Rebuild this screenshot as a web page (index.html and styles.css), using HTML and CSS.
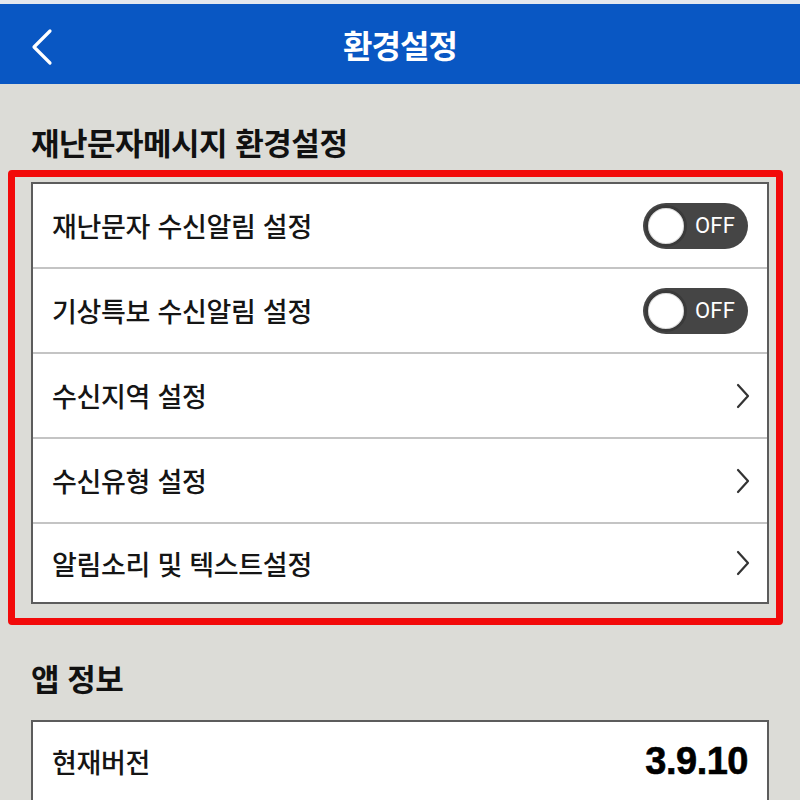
FILE: index.html
```html
<!DOCTYPE html>
<html lang="ko">
<head>
<meta charset="utf-8">
<title>환경설정</title>
<link rel="stylesheet" href="styles.css">
</head>
<body>
<div class="strip"></div>
<header class="appbar">
  <span class="back" aria-label="뒤로">
    <svg width="24" height="38" viewBox="0 0 24 38"><path d="M20 3 L4 19 L20 35" fill="none" stroke="#fff" stroke-width="3.2" stroke-linecap="round" stroke-linejoin="round"/></svg>
  </span>
  <h1 class="title">환경설정</h1>
</header>
<main class="content">
  <h2 class="section-title first">재난문자메시지 환경설정</h2>
  <div class="highlight">
    <ul class="card">
      <li class="row"><span class="label">재난문자 수신알림 설정</span><span class="toggle"><span class="knob"></span><span class="off">OFF</span></span></li>
      <li class="row"><span class="label">기상특보 수신알림 설정</span><span class="toggle"><span class="knob"></span><span class="off">OFF</span></span></li>
      <li class="row"><span class="label">수신지역 설정</span><svg class="chev" width="14" height="26" viewBox="0 0 14 26"><path d="M2 2 L12 13 L2 24" fill="none" stroke="#333" stroke-width="2.2" stroke-linecap="round" stroke-linejoin="round"/></svg></li>
      <li class="row"><span class="label">수신유형 설정</span><svg class="chev" width="14" height="26" viewBox="0 0 14 26"><path d="M2 2 L12 13 L2 24" fill="none" stroke="#333" stroke-width="2.2" stroke-linecap="round" stroke-linejoin="round"/></svg></li>
      <li class="row last"><span class="label">알림소리 및 텍스트설정</span><svg class="chev" width="14" height="26" viewBox="0 0 14 26"><path d="M2 2 L12 13 L2 24" fill="none" stroke="#333" stroke-width="2.2" stroke-linecap="round" stroke-linejoin="round"/></svg></li>
    </ul>
  </div>
  <h2 class="section-title second">앱 정보</h2>
  <ul class="card info">
    <li class="row version"><span class="label">현재버전</span><span class="ver">3.9.10</span></li>
  </ul>
</main>
</body>
</html>
```
FILE: styles.css
```css
* { box-sizing: border-box; }
html, body { margin: 0; padding: 0; }
body {
  background: #dcdcd7;
  font-family: "Noto Sans CJK KR", "Noto Sans", sans-serif;
  color: #111;
  width: 800px;
  height: 800px;
  overflow: hidden;
}
.strip { height: 4px; background: #e4e8ee; }
.appbar {
  height: 80px;
  background: #0957c3;
  display: flex;
  align-items: center;
  justify-content: center;
  position: relative;
}
.back {
  position: absolute;
  left: 30px;
  top: 24px;
  display: flex;
}
.title {
  margin: 0;
  color: #fff;
  font-size: 32px;
  font-weight: 700;
  line-height: 40px;
  letter-spacing: -1px;
}
.content { display: flex; flex-direction: column; }
.section-title {
  margin: 0;
  padding-left: 31px;
  font-size: 31px;
  font-weight: 700;
  line-height: 40px;
  letter-spacing: -0.5px;
  color: #111;
}
.section-title.first { padding-top: 38px; margin-bottom: 8px; }
.section-title.second { padding-top: 33px; margin-bottom: 22px; }
.highlight {
  margin-left: 8px;
  width: 775px;
  border: 7px solid #f20a0a;
  border-radius: 4px;
  padding: 5px 7px 14px 16px;
}
.card {
  list-style: none;
  margin: 0;
  padding: 0;
  background: #fff;
  border: 2px solid #5c5c5c;
}
.info { margin-left: 31px; width: 738px; }
.row {
  height: 85px;
  display: flex;
  align-items: center;
  justify-content: space-between;
  padding: 0 19px 0 19px;
  border-bottom: 2px solid #c4c4c4;
}
.row.last { border-bottom: none; height: 78px; }
.row.version { border-bottom: none; height: 78px; }
.label {
  font-size: 27px;
  font-weight: 500;
  letter-spacing: -0.3px;
  color: #151515;
}
.toggle {
  width: 105px;
  height: 46px;
  border-radius: 23px;
  background: #454545;
  display: flex;
  align-items: center;
  padding-left: 2px;
  gap: 8px;
}
.knob {
  width: 42px;
  height: 42px;
  border-radius: 50%;
  background: #fff;
  border: 3px solid #3a3a3a;
  box-shadow: inset 0 0 0 1px #ddd;
}
.off {
  color: #fff;
  font-family: "Roboto", "Liberation Sans", sans-serif;
  font-size: 22px;
  font-weight: 400;
  letter-spacing: 0.2px;
}
.chev { margin-right: -2px; }
.ver {
  font-family: "Liberation Sans", Arial, sans-serif;
  font-size: 38px;
  font-weight: 700;
  color: #000;
  letter-spacing: -0.5px;
  -webkit-text-stroke: 0.6px #000;
}
```
